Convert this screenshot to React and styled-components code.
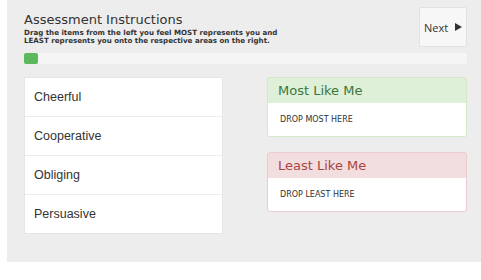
import React from 'react';
import styled, { createGlobalStyle } from 'styled-components';

const GlobalStyle = createGlobalStyle`
  html, body {
    margin: 0;
    padding: 0;
    background: #ffffff;
  }
`;

const Page = styled.div`
  margin-left: 7px;
  width: 474px;
  height: 262px;
  background: #ededed;
  box-sizing: border-box;
  padding: 7px 14px 0 17px;
  font-family: "DejaVu Sans", Verdana, sans-serif;
`;

const Header = styled.div`
  display: flex;
  justify-content: space-between;
  align-items: flex-start;
`;

const Titles = styled.div`
  padding-top: 5px;
`;

const Title = styled.div`
  font-size: 13px;
  color: #333;
  line-height: 16px;
`;

const Subtitle = styled.div`
  font-size: 7.1px;
  font-weight: bold;
  color: #333;
  line-height: 8px;
  margin-top: 1px;
`;

const NextButton = styled.button`
  width: 48px;
  height: 40px;
  background: #f7f7f7;
  border: 1px solid #e2e2e2;
  border-radius: 2px;
  font-family: "Open Sans", sans-serif;
  font-size: 11px;
  color: #333;
  display: flex;
  align-items: center;
  justify-content: center;
  gap: 7px;
  padding: 0;
`;

const Progress = styled.div`
  margin-top: 6px;
  height: 11px;
  background: #f5f5f5;
  border-radius: 2px;
`;

const ProgressFill = styled.div`
  height: 100%;
  background: #5cb85c;
  border-radius: 2px;
`;

const Body = styled.div`
  display: grid;
  grid-template-columns: 199px 200px;
  justify-content: space-between;
  margin-top: 13px;
`;

const List = styled.div`
  align-self: start;
  background: #fff;
  border: 1px solid #e6e6e6;
  display: flex;
  flex-direction: column;
`;

const Item = styled.div`
  height: 38px;
  display: flex;
  align-items: center;
  padding-left: 9px;
  font-family: "Liberation Sans", Arial, sans-serif;
  font-size: 12.5px;
  color: #333;
  &:not(:last-child) {
    border-bottom: 1px solid #ececec;
  }
`;

const Zones = styled.div`
  display: flex;
  flex-direction: column;
  gap: 15px;
`;

const Zone = styled.div`
  border-radius: 3px;
  border: 1px solid ${p => p.$border};
  background: ${p => p.$bg};
  overflow: hidden;
`;

const ZoneHead = styled.div`
  height: 25px;
  display: flex;
  align-items: center;
  padding-left: 10px;
  font-size: 13px;
  color: ${p => p.$color};
`;

const Drop = styled.div`
  height: 33px;
  background: #fff;
  display: flex;
  align-items: center;
  padding-left: 12px;
  font-size: 8px;
  color: #333;
`;

const items = ['Cheerful', 'Cooperative', 'Obliging', 'Persuasive'];

const App = () => (
  <>
    <GlobalStyle />
    <Page>
      <Header>
        <Titles>
          <Title>Assessment Instructions</Title>
          <Subtitle>
            Drag the items from the left you feel MOST represents you and
            <br />
            LEAST represents you onto the respective areas on the right.
          </Subtitle>
        </Titles>
        <NextButton>
          Next
          <svg width="7" height="8" viewBox="0 0 7 8">
            <path d="M0 0 L7 4 L0 8 Z" fill="#333" />
          </svg>
        </NextButton>
      </Header>
      <Progress>
        <ProgressFill style={{ width: `${(14 / 442) * 100}%` }} />
      </Progress>
      <Body>
        <List>
          {items.map(i => (
            <Item key={i}>{i}</Item>
          ))}
        </List>
        <Zones>
          <Zone $bg="#dff0d8" $border="#d6e9c6">
            <ZoneHead $color="#3c763d">Most Like Me</ZoneHead>
            <Drop>DROP MOST HERE</Drop>
          </Zone>
          <Zone $bg="#f2dede" $border="#ebccd1">
            <ZoneHead $color="#a94442">Least Like Me</ZoneHead>
            <Drop>DROP LEAST HERE</Drop>
          </Zone>
        </Zones>
      </Body>
    </Page>
  </>
);

export default App;
